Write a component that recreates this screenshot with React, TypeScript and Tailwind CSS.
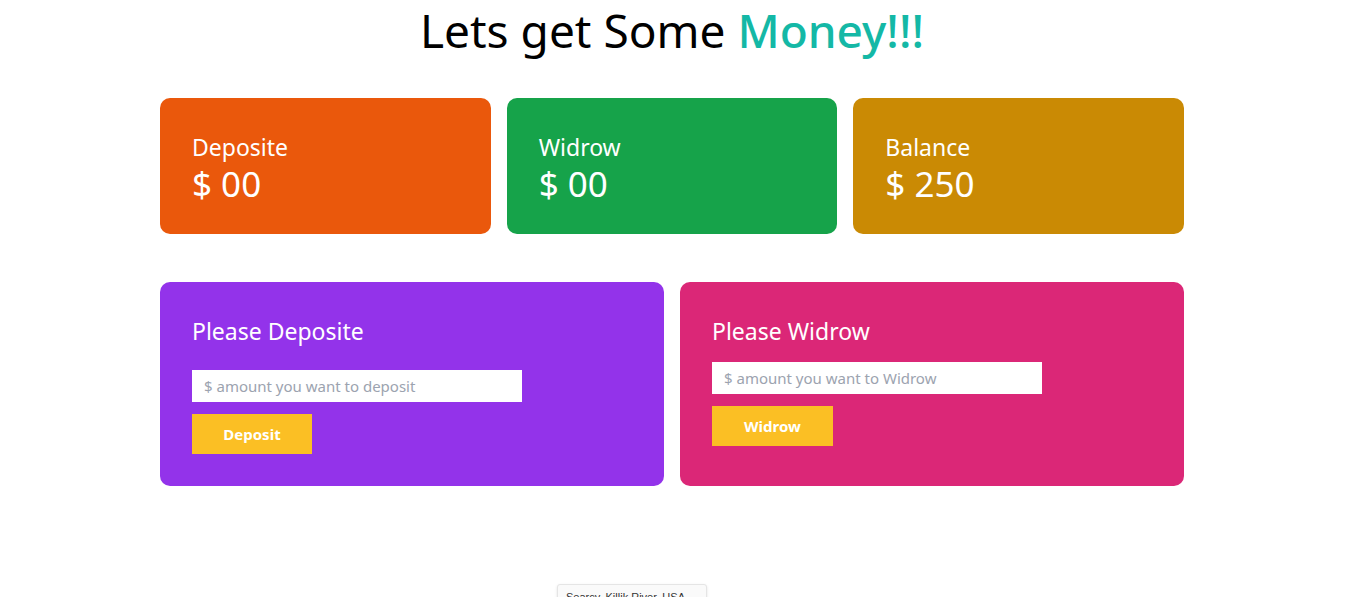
import React from 'react';

const stats = [
  { label: 'Deposite', value: '$ 00', bg: 'bg-[#ea580c]' },
  { label: 'Widrow', value: '$ 00', bg: 'bg-[#16a34a]' },
  { label: 'Balance', value: '$ 250', bg: 'bg-[#ca8a04]' },
];

export default function App() {
  return (
    <div className="relative h-[597px] overflow-hidden bg-white pr-[10px] font-['Noto_Sans',sans-serif]">
      <div className="mx-auto w-[1024px]">
        <h1 className="text-center text-[46px] leading-[60px] text-black">
          Lets get Some <span className="font-medium text-[#14b8a6]">Money!!!</span>
        </h1>

        <div className="mt-[38px] grid grid-cols-3 gap-4">
          {stats.map((s) => (
            <div key={s.label} className={`${s.bg} h-[136px] rounded-[10px] px-8 pt-[34px] text-white`}>
              <p className="text-[23px] leading-[30px]">{s.label}</p>
              <p className="text-[35px] leading-[44px]">{s.value}</p>
            </div>
          ))}
        </div>

        <div className="mt-12 grid grid-cols-2 gap-4">
          <div className="h-[204px] rounded-[10px] bg-[#9333ea] px-8 pt-[34px] text-white">
            <h2 className="text-[23px] leading-[30px]">Please Deposite</h2>
            <input
              className="mt-[24px] block h-8 w-[330px] bg-white px-3 text-[15px] text-gray-700 outline-none placeholder:text-[#9ca3af]"
              placeholder="$ amount you want to deposit"
            />
            <button className="mt-3 h-10 w-[120px] bg-[#fbbf24] text-[15px] font-bold text-white">Deposit</button>
          </div>
          <div className="h-[204px] rounded-[10px] bg-[#db2777] px-8 pt-[34px] text-white">
            <h2 className="text-[23px] leading-[30px]">Please Widrow</h2>
            <input
              className="mt-[16px] block h-8 w-[330px] bg-white px-3 text-[15px] text-gray-700 outline-none placeholder:text-[#9ca3af]"
              placeholder="$ amount you want to Widrow"
            />
            <button className="mt-3 h-10 w-[121px] bg-[#fbbf24] text-[15px] font-bold text-white">Widrow</button>
          </div>
        </div>
      </div>

      <div className="absolute left-[557px] top-[584px] h-[24px] w-[150px] overflow-hidden rounded-[3px] border border-[#e5e5e5] bg-[#fafafa] px-2 pt-[5px] text-[11px] leading-[14px] text-[#333] shadow-sm font-['Liberation_Sans',sans-serif]">
        Searcy, Killik River, USA
      </div>
    </div>
  );
}
